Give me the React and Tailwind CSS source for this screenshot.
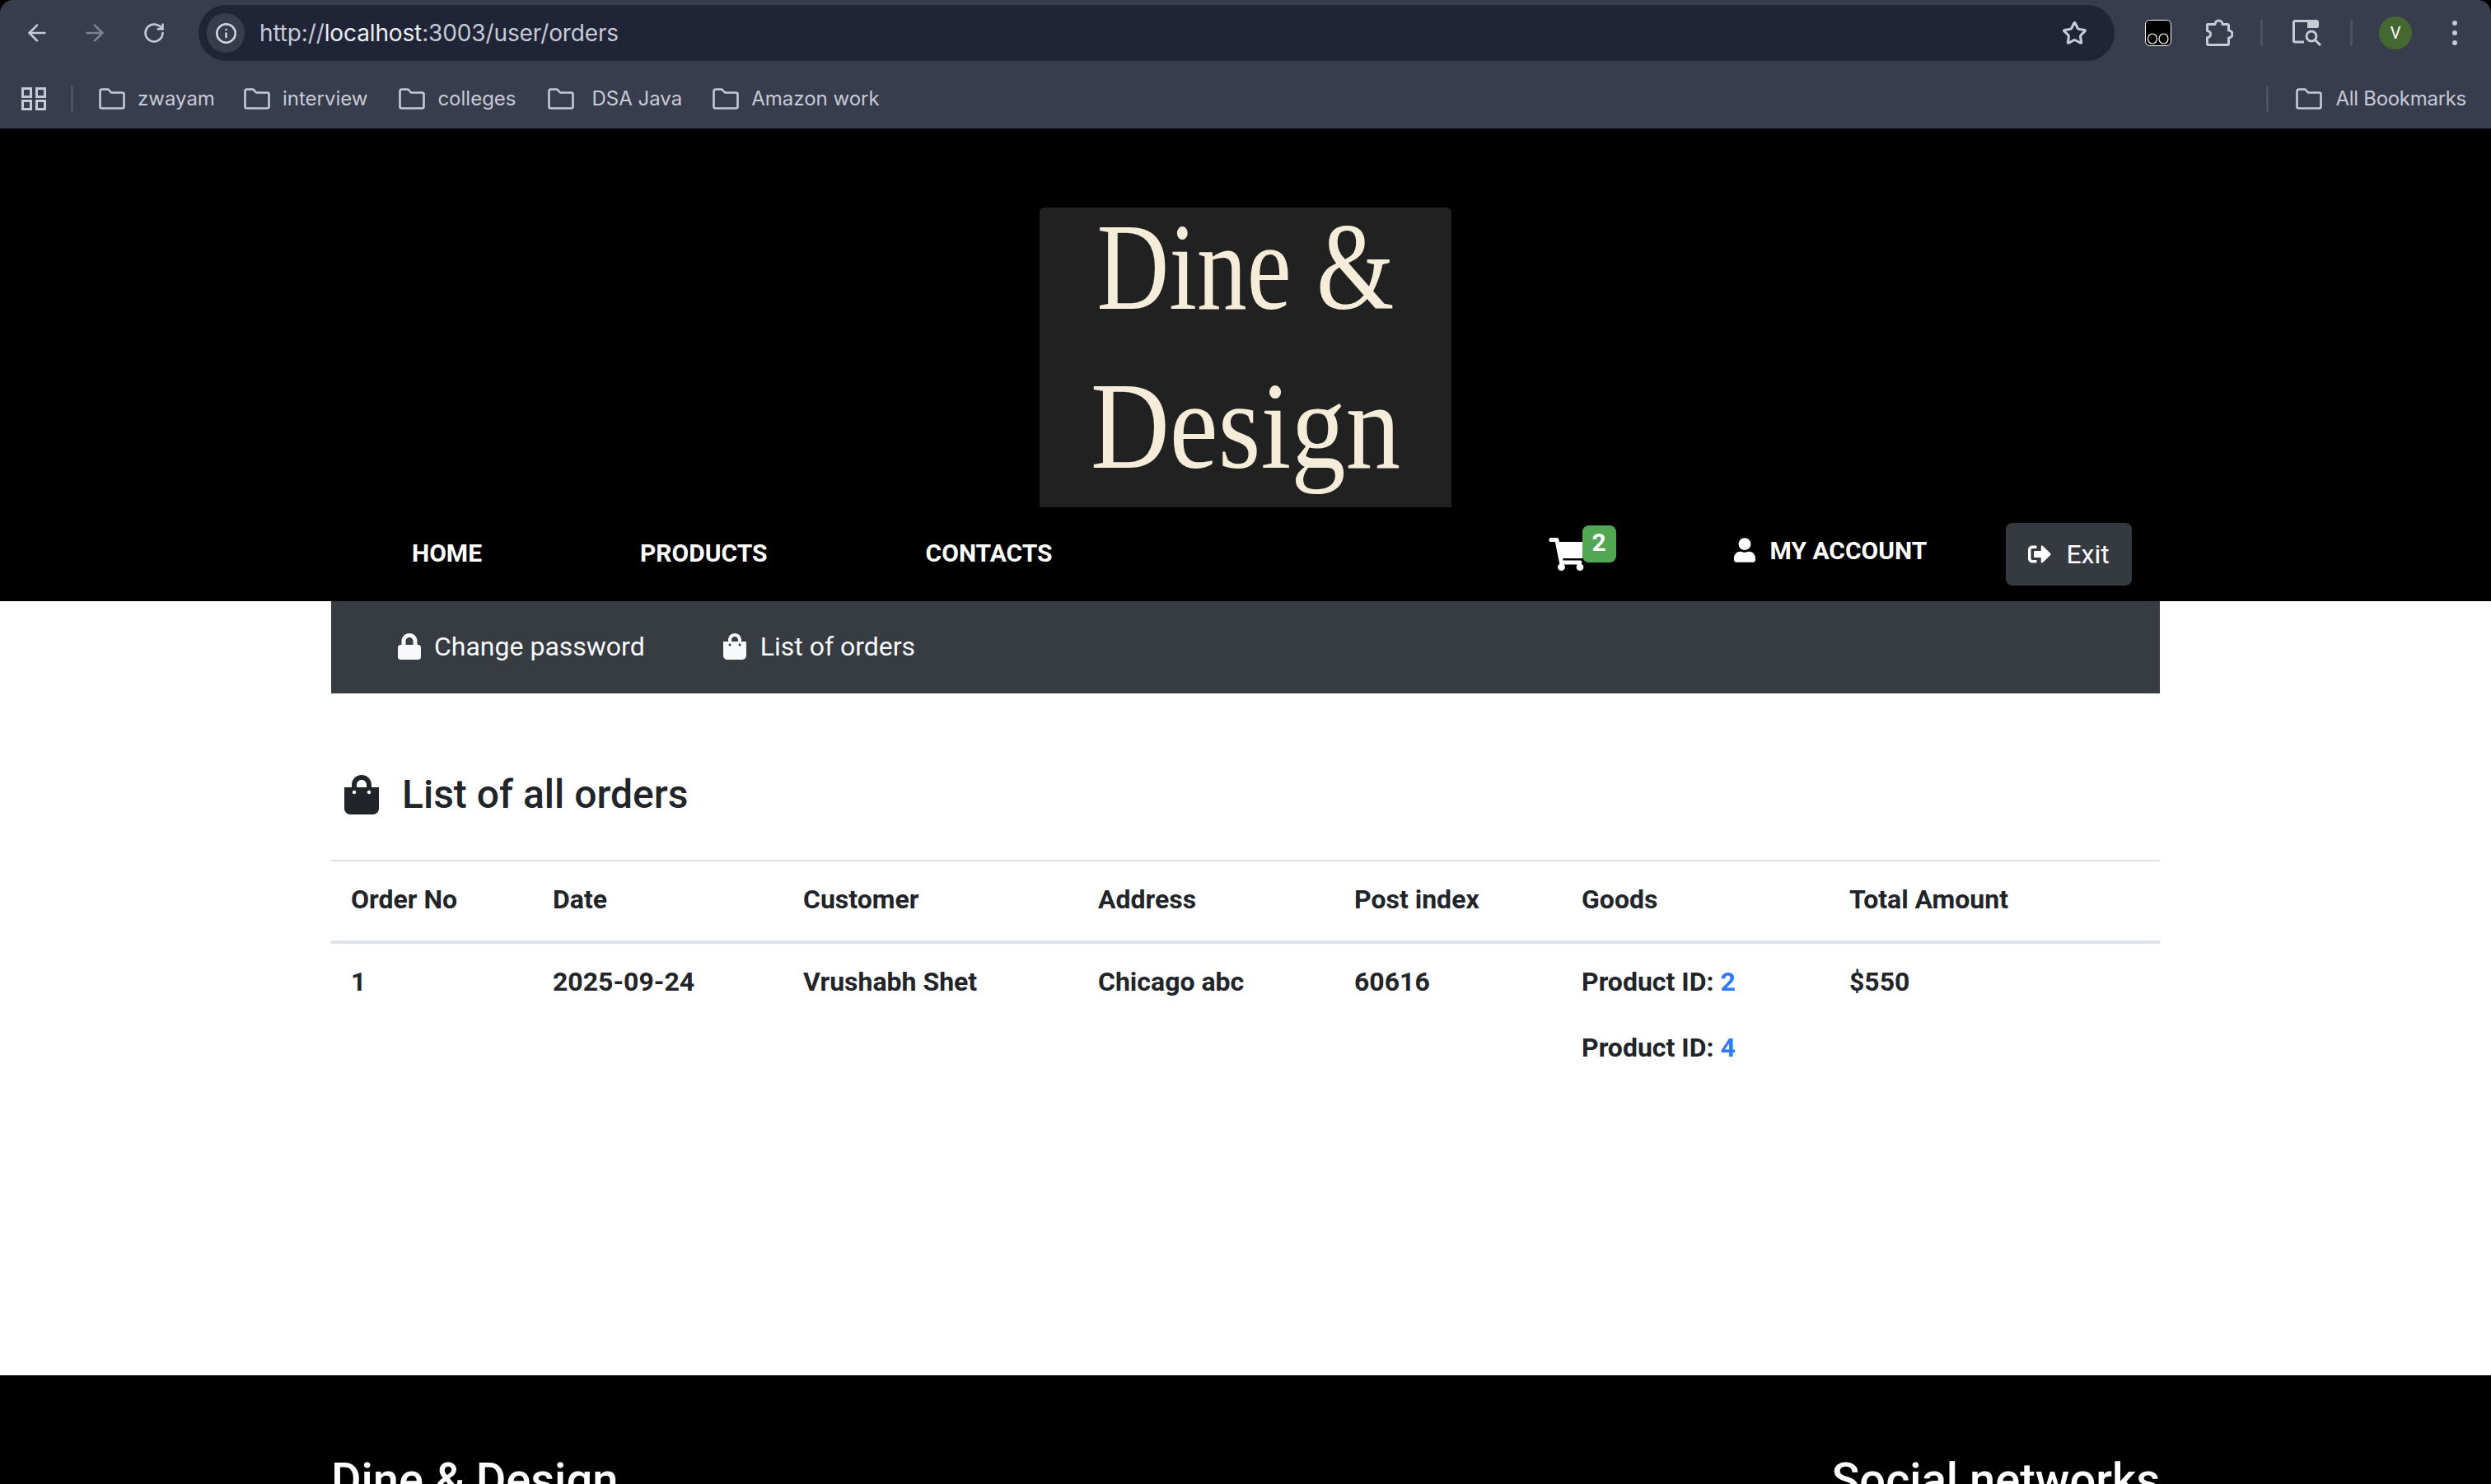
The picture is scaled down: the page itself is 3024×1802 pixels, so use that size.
import { ArrowLeft, ArrowRight, RotateCw, Info, Star } from 'lucide-react'
import { FaLock, FaShoppingBag, FaShoppingCart, FaUser, FaSignOutAlt } from 'react-icons/fa'

const bookmarks = [
  { name: 'zwayam', gap: 'ml-[31px] gap-[15px]' },
  { name: 'interview', gap: 'ml-[35px] gap-[15px]' },
  { name: 'colleges', gap: 'ml-[38px] gap-[15px]' },
  { name: 'DSA Java', gap: 'ml-[38px] gap-[22px]' },
  { name: 'Amazon work', gap: 'ml-[37px] gap-[15px]' },
]

const columns = [
  { label: 'Order No', width: 'w-[245px]' },
  { label: 'Date', width: 'w-[304px]' },
  { label: 'Customer', width: 'w-[358px]' },
  { label: 'Address', width: 'w-[311px]' },
  { label: 'Post index', width: 'w-[276px]' },
  { label: 'Goods', width: 'w-[325px]' },
  { label: 'Total Amount', width: 'w-[401px]' },
]

function FolderIcon({ className = '' }) {
  return (
    <svg viewBox="0 0 32 26" className={`w-[32px] h-[26px] shrink-0 ${className}`} fill="none" stroke="#c7cad5" strokeWidth="2.6">
      <path d="M1.5 3.5a2 2 0 0 1 2-2h8l3.5 4h13.5a2 2 0 0 1 2 2v15a2 2 0 0 1-2 2h-25a2 2 0 0 1-2-2z" strokeLinejoin="round" />
    </svg>
  )
}

function AppsIcon() {
  return (
    <svg viewBox="0 0 30 28" className="w-[30px] h-[28px] shrink-0" fill="none" stroke="#c7cad5" strokeWidth="3">
      <rect x="1.5" y="1.5" width="10" height="10" />
      <rect x="18.5" y="1.5" width="10" height="10" />
      <rect x="1.5" y="16.5" width="10" height="10" />
      <rect x="18.5" y="16.5" width="10" height="10" />
    </svg>
  )
}

function GlassesExtension() {
  return (
    <svg viewBox="0 0 32 32" className="w-[32px] h-[32px] shrink-0">
      <rect x="0.5" y="0.5" width="31" height="31" rx="5" fill="#000" stroke="#fff" />
      <ellipse cx="9" cy="23" rx="5.5" ry="6" fill="none" stroke="#fff" strokeWidth="1.2" />
      <ellipse cx="22.5" cy="23" rx="5.5" ry="6" fill="none" stroke="#fff" strokeWidth="1.2" />
    </svg>
  )
}

function PuzzleIcon() {
  return (
    <svg viewBox="0 0 34 34" className="w-[34px] h-[34px] shrink-0" fill="none" stroke="#c7cad5" strokeWidth="3" strokeLinejoin="round">
      <path d="M3 6.5h9a4.5 4.5 0 0 1 9 0h6a1.500 1.500 0 0 1 1.500 1.500v6a4.500 4.500 0 0 1 0 9v7a1.500 1.500 0 0 1-1.500 1.500H4a1.500 1.500 0 0 1-1.500-1.500v-7.500a4 4 0 0 0 0-8V8A1.500 1.500 0 0 1 3 6.500z" />
    </svg>
  )
}

function TabSearchIcon() {
  return (
    <svg viewBox="0 0 36 32" className="w-[36px] h-[32px] shrink-0" fill="none" stroke="#c7cad5" strokeWidth="3">
      <path d="M14 27H3a1.500 1.500 0 0 1-1.500-1.500V3A1.500 1.500 0 0 1 3 1.500h26a1.500 1.500 0 0 1 1.500 1.500v6" />
      <rect x="18" y="1" width="13" height="9" fill="#c7cad5" stroke="none" />
      <circle cx="23" cy="20" r="6" />
      <path d="M27.500 24.500 34 31" />
    </svg>
  )
}

function Separator({ className = '' }) {
  return <div className={`w-[3px] h-[32px] rounded-full bg-[#4c5263] shrink-0 ${className}`} />
}

function BrowserChrome() {
  return (
    <div className="h-[156px] shrink-0 bg-[#373d4d] rounded-t-[16px] text-[#c7cad5]">
      <div className="h-[78px] pt-[2px] flex items-center">
        <ArrowLeft className="w-[32px] h-[32px] ml-[29px] shrink-0" strokeWidth={2} color="#c7cad5" />
        <ArrowRight className="w-[32px] h-[32px] ml-[38px] shrink-0" strokeWidth={2} color="#7d8291" />
        <RotateCw className="w-[28px] h-[28px] ml-[42px] shrink-0" strokeWidth={2.2} color="#c7cad5" />
        <div className="ml-[40px] w-[2326px] h-[68px] rounded-full bg-[#1f2536] flex items-center pl-[10px] shrink-0">
          <div className="w-[46px] h-[48px] rounded-full bg-[#373d4d] flex items-center justify-center">
            <Info className="w-[27px] h-[27px]" strokeWidth={2.2} color="#d3d6df" />
          </div>
          <div className="ml-[18px] text-[28px] [font-family:Inter,sans-serif] tracking-[-0.13px] text-[#c7cad5]">
            http://<span className="text-[#eceef3]">localhost</span>:3003/user/orders
          </div>
          <Star className="w-[31px] h-[31px] ml-auto mr-[33px]" strokeWidth={2.4} color="#c7cad5" />
        </div>
        <div className="ml-[37px]"><GlassesExtension /></div>
        <div className="ml-[41px]"><PuzzleIcon /></div>
        <Separator className="ml-[33px]" />
        <div className="ml-[36px]"><TabSearchIcon /></div>
        <Separator className="ml-[34px]" />
        <div className="ml-[32px] w-[40px] h-[40px] rounded-full bg-[#44682f] text-white text-[20px] flex items-center justify-center shrink-0">V</div>
        <div className="ml-[49px] flex flex-col gap-[6px] shrink-0">
          <div className="w-[6px] h-[6px] rounded-full bg-[#c7cad5]" />
          <div className="w-[6px] h-[6px] rounded-full bg-[#c7cad5]" />
          <div className="w-[6px] h-[6px] rounded-full bg-[#c7cad5]" />
        </div>
      </div>
      <div className="h-[78px] flex items-center pl-[26px] pt-[6px] text-[24px] [font-family:Inter,sans-serif]">
        <AppsIcon />
        <Separator className="ml-[30px]" />
        {bookmarks.map((b) => (
          <div key={b.name} className={`flex items-center ${b.gap}`}>
            <FolderIcon />
            <span>{b.name}</span>
          </div>
        ))}
        <Separator className="ml-auto" />
        <div className="flex items-center gap-[17px] ml-[33px] mr-[30px] tracking-[-0.3px]">
          <FolderIcon />
          <span>All Bookmarks</span>
        </div>
      </div>
    </div>
  )
}

function Logo() {
  return (
    <div className="w-[500px] h-[364px] mx-auto pt-[2px] bg-[#212121] rounded-t-[6px] text-[#f5ecd9] [font-family:'Liberation_Serif',serif] text-[150px] leading-[140px] text-center">
      <div className="scale-x-[0.81] whitespace-nowrap">Dine &amp;</div>
      <div className="mt-[53px] scale-x-[0.885] whitespace-nowrap">Design</div>
    </div>
  )
}

function Header() {
  return (
    <header className="bg-black pt-[96px] shrink-0">
      <Logo />
      <nav className="w-[2220px] h-[114px] mx-auto flex items-center text-white font-bold text-[30px]">
        <a className="ml-[98px] mb-[4px]">HOME</a>
        <a className="ml-[192px] mb-[4px]">PRODUCTS</a>
        <a className="ml-[192px] mb-[4px]">CONTACTS</a>
        <div className="relative ml-[600px] w-[44px]">
          <FaShoppingCart className="w-[50px] h-[40px]" />
          <span className="absolute left-[43px] -top-[15px] w-[41px] h-[45px] rounded-[8px] bg-[#52a852] text-[30px] leading-[42px] text-center">2</span>
        </div>
        <a className="ml-[183px] mb-[10px] flex items-center gap-[18px]">
          <FaUser className="w-[26px] h-[30px]" />
          MY ACCOUNT
        </a>
        <button className="ml-[96px] w-[153px] h-[76px] rounded-[8px] bg-[#343a40] flex items-center pl-[25px] gap-[16px] font-normal text-[32px]">
          <FaSignOutAlt className="w-[32px] h-[28px]" />
          Exit
        </button>
      </nav>
    </header>
  )
}

function SubNav() {
  return (
    <div className="w-[2220px] h-[112px] mx-auto bg-[#373b42] flex items-center pl-[81px] pb-[2px] text-[32px] text-[#f8f9fa] shrink-0">
      <div className="flex items-center gap-[16px]">
        <FaLock className="w-[28px] h-[32px]" />
        Change password
      </div>
      <div className="flex items-center gap-[17px] ml-[95px]">
        <FaShoppingBag className="w-[28px] h-[32px]" />
        List of orders
      </div>
    </div>
  )
}

function OrdersTable() {
  return (
    <table className="w-full table-fixed border-collapse text-[32px] font-bold text-[#212529] leading-[48px]">
      <thead>
        <tr className="border-t-2 border-b-4 border-[#dee2e6]">
          {columns.map((c) => (
            <th key={c.label} className={`${c.width} px-[24px] pt-[22px] pb-[26px] text-left font-bold`}>{c.label}</th>
          ))}
        </tr>
      </thead>
      <tbody>
        <tr className="align-top">
          <td className="px-[24px] pt-[22px] pb-[26px]">1</td>
          <td className="px-[24px] pt-[22px] pb-[26px]">2025-09-24</td>
          <td className="px-[24px] pt-[22px] pb-[26px]">Vrushabh Shet</td>
          <td className="px-[24px] pt-[22px] pb-[26px]">Chicago abc</td>
          <td className="px-[24px] pt-[22px] pb-[26px]">60616</td>
          <td className="px-[24px] pt-[22px] pb-[26px]">
            <p className="mb-[32px]">Product ID: <a className="text-[#2f7bf5]">2</a></p>
            <p>Product ID: <a className="text-[#2f7bf5]">4</a></p>
          </td>
          <td className="px-[24px] pt-[22px] pb-[26px]">$550</td>
        </tr>
      </tbody>
    </table>
  )
}

function Footer() {
  return (
    <footer className="bg-black grow text-white pt-[94px]">
      <div className="w-[2220px] mx-auto flex justify-between text-[56px] leading-[67px] font-medium">
        <h3>Dine &amp; Design</h3>
        <h3>Social networks</h3>
      </div>
    </footer>
  )
}

export default function App() {
  return (
    <div className="h-[1802px] w-[3024px] overflow-hidden bg-black flex flex-col [font-family:Roboto,sans-serif]">
      <BrowserChrome />
      <Header />
      <main className="h-[940px] bg-white shrink-0">
        <SubNav />
        <div className="w-[2220px] mx-auto">
          <div className="pt-[94px] pb-[50px] pl-[16px] flex items-center gap-[28px] text-[48px] leading-[58px] font-medium text-[#212529]">
            <FaShoppingBag className="w-[42px] h-[48px]" />
            <h3>List of all orders</h3>
          </div>
          <OrdersTable />
        </div>
      </main>
      <Footer />
    </div>
  )
}
